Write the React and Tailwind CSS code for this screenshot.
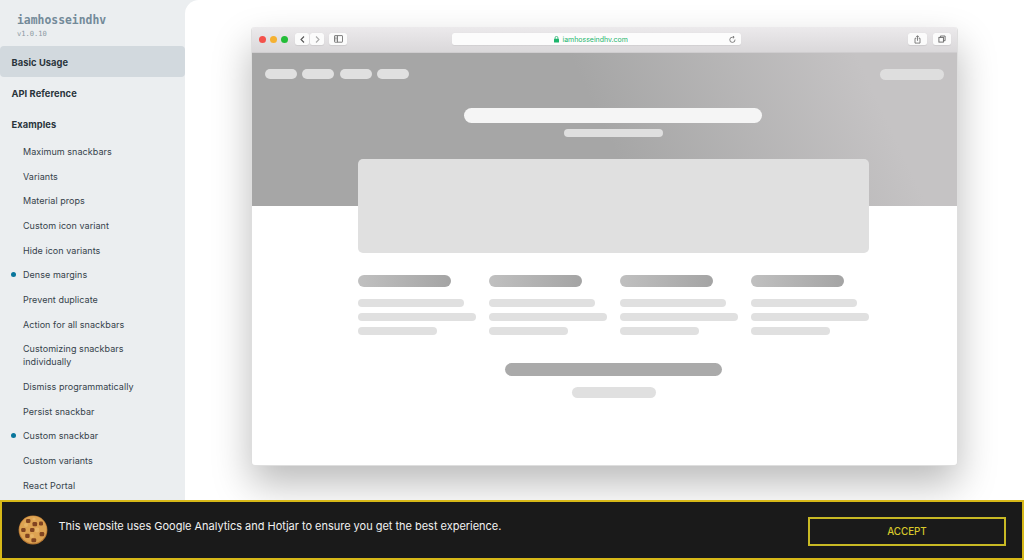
const examples = [
  { label: 'Maximum snackbars' },
  { label: 'Variants' },
  { label: 'Material props' },
  { label: 'Custom icon variant' },
  { label: 'Hide icon variants' },
  { label: 'Dense margins', dot: true },
  { label: 'Prevent duplicate' },
  { label: 'Action for all snackbars' },
  { label: 'Customizing snackbars individually' },
  { label: 'Dismiss programmatically' },
  { label: 'Persist snackbar' },
  { label: 'Custom snackbar', dot: true },
  { label: 'Custom variants' },
  { label: 'React Portal' },
];

function Sidebar() {
  return (
    <aside className="w-[185px] shrink-0 overflow-hidden text-[#35424b]">
      <div className="h-[46px] pl-[17px] pt-[13px] font-['DejaVu_Sans_Mono',monospace]">
        <div className="text-[11.4px] leading-[14px] font-bold text-[#738a99]">iamhosseindhv</div>
        <div className="text-[7.1px] leading-[13px] text-[#8b9aa4]">v1.0.10</div>
      </div>
      <nav className="text-[9.3px] font-bold tracking-[0.08px] text-[#29343b]">
        <div className="flex h-[31px] items-center rounded bg-[#d2d9de] pl-[11.5px] pt-[2px]">Basic Usage</div>
        <div className="flex h-[31px] items-center pl-[11.5px] pt-[2px]">API Reference</div>
        <div className="flex h-[31px] items-center pl-[11.5px] pt-[2px]">Examples</div>
      </nav>
      <ul className="pt-[0.4px]">
        {examples.map((item) => (
          <li key={item.label} className="flex pt-[5.8px] pb-[5.75px] text-[9px] leading-[13.1px] tracking-[0.05px]">
            <span className="flex w-[23px] shrink-0 pl-[11px] pt-[4px]">
              {item.dot && <span className="size-[5px] rounded-full bg-[#08769c]" />}
            </span>
            <span className="w-[122px]">{item.label}</span>
          </li>
        ))}
      </ul>
    </aside>
  );
}

function ToolButton({ className, children }) {
  return (
    <span className={`flex h-[12px] items-center justify-center rounded-[2.5px] bg-[#fbfbfb] shadow-[0_0.5px_1px_rgba(0,0,0,0.08)] ${className}`}>
      {children}
    </span>
  );
}

function Toolbar() {
  return (
    <div className="flex h-[26px] items-center border-b border-[#cfcdcf] bg-linear-to-b from-[#eceaec] to-[#dad8da] pl-[7px] pr-[6px] pb-px">
      <div className="flex w-[36px] gap-[4px]">
        <span className="size-[7px] rounded-full bg-[#f4514b]" />
        <span className="size-[7px] rounded-full bg-[#f5b131]" />
        <span className="size-[7px] rounded-full bg-[#24bd38]" />
      </div>
      <div className="flex w-[157px] gap-[1px]">
        <ToolButton className="w-[14px]">
          <svg className="h-[7px] w-[5px]" viewBox="0 0 5 7" fill="none" stroke="#555" strokeWidth="1.1"><path d="M4 0.5 1 3.5 4 6.5" /></svg>
        </ToolButton>
        <ToolButton className="w-[14px]">
          <svg className="h-[7px] w-[5px]" viewBox="0 0 5 7" fill="none" stroke="#aaa" strokeWidth="1.1"><path d="M1 0.5 4 3.5 1 6.5" /></svg>
        </ToolButton>
        <ToolButton className="ml-[4px] w-[18px]">
          <svg className="h-[8px] w-[9px]" viewBox="0 0 9 8" fill="none" stroke="#707070" strokeWidth="0.9"><rect x="0.5" y="0.6" width="8" height="6.6" rx="0.5" /><path d="M3.5 0.6v6.6M1.4 2.2h1.2M1.4 3.6h1.2M1.4 5h1.2" /></svg>
        </ToolButton>
      </div>
      <div className="flex h-[12px] w-[289px] items-center rounded-[2.5px] bg-[#fcfcfc] pl-[102px] pr-[5px] shadow-[0_0.5px_1px_rgba(0,0,0,0.06)]">
        <svg className="h-[7px] w-[5px]" viewBox="0 0 5 7"><rect y="2.8" width="5" height="3.8" rx="0.5" fill="#1db56c" /><path d="M1.1 3V1.8a1.4 1.4 0 0 1 2.8 0V3" fill="none" stroke="#1db56c" strokeWidth="0.8" /></svg>
        <span className="ml-[3.5px] whitespace-nowrap pt-px text-[7px] leading-[12px] tracking-[-0.02px] text-[#1db56c]">iamhosseindhv.com</span>
        <svg className="ml-auto h-[7px] w-[7px]" viewBox="0 0 7 7" fill="none" stroke="#666" strokeWidth="0.8"><path d="M6 3.6A2.6 2.6 0 1 1 3.6 1.2H5M3.9 0 5.2 1.2 3.9 2.4" /></svg>
      </div>
      <div className="ml-auto flex gap-[6px]">
        <ToolButton className="w-[19px]">
          <svg className="h-[9px] w-[7px]" viewBox="0 0 7 9" fill="none" stroke="#666" strokeWidth="0.8"><path d="M2.3 3.3H1v4.8h5V3.3H4.7M3.5 5.8V0.8M2 2.2 3.5 0.7 5 2.2" /></svg>
        </ToolButton>
        <ToolButton className="w-[18px]">
          <svg className="h-[8px] w-[8px]" viewBox="0 0 8 8" fill="none" stroke="#666" strokeWidth="0.9"><rect x="0.9" y="2.4" width="4.5" height="4.7" /><path d="M2.4 2.4V1h4.7v4.7H5.4" /></svg>
        </ToolButton>
      </div>
    </div>
  );
}

function Column() {
  return (
    <div className="w-[118.5px]">
      <div className="h-[12px] w-[93px] rounded-full bg-linear-to-r from-[#c0c0c0] to-[#a4a4a4]" />
      <div className="mt-[12px] h-[8px] w-[106.5px] rounded-full bg-[#e0e0e0]" />
      <div className="mt-[6px] h-[8px] rounded-full bg-[#e0e0e0]" />
      <div className="mt-[6px] h-[8px] w-[79px] rounded-full bg-[#e0e0e0]" />
    </div>
  );
}

function BrowserWindow() {
  return (
    <div className="ml-[66px] mt-[27px] h-[439px] w-[707px] overflow-hidden rounded-[4px] border border-t-0 border-[#dedede] bg-white shadow-[0_18px_38px_rgba(0,0,0,0.27)]">
      <Toolbar />
      <div className="h-[153px] bg-[linear-gradient(65deg,#a6a6a6_0%,#a6a6a6_50%,#c5c3c4_87%)] pt-[16px]">
        <div className="flex pl-[13px] pr-[13px]">
          <div className="flex gap-[5.4px]">
            {[0, 1, 2, 3].map((i) => <span key={i} className="h-[10px] w-[32px] rounded-full bg-[#e0e0e0]" />)}
          </div>
          <span className="ml-auto h-[11px] w-[64px] rounded-full bg-[#dedede]" />
        </div>
        <div className="ml-[212px] mt-[28px] h-[15px] w-[298px] rounded-full bg-[#f5f5f5]" />
        <div className="ml-[311.5px] mt-[6px] h-[8px] w-[99.5px] rounded-full bg-[#dfdfdf]" />
      </div>
      <div className="ml-[105.5px] -mt-[47px] h-[94px] w-[511.5px] rounded-[5px] bg-[#e0e0e0]" />
      <div className="ml-[105.5px] mt-[22.3px] flex gap-[12.5px]">
        <Column />
        <Column />
        <Column />
        <Column />
      </div>
      <div className="ml-[253px] mt-[28px] h-[13px] w-[217px] rounded-full bg-[#aaaaaa]" />
      <div className="ml-[319.5px] mt-[11px] h-[11px] w-[84.5px] rounded-full bg-[#e0e0e0]" />
    </div>
  );
}

function Cookie() {
  return (
    <svg className="size-[30px]" viewBox="0 0 30 30">
      <circle cx="15" cy="15" r="14.4" fill="#b87935" />
      <circle cx="15" cy="14.6" r="13.6" fill="#dda352" />
      <g fill="#e6b366"><circle cx="8" cy="10" r="2" /><circle cx="19" cy="15" r="2.4" /><circle cx="14" cy="21" r="2" /><circle cx="16" cy="4" r="1.6" /></g>
      <g fill="#814421"><rect x="8" y="4" width="4.4" height="4" rx="1.2" /><rect x="14.5" y="7" width="4.6" height="4.2" rx="1.2" /><rect x="21" y="6.5" width="4" height="4" rx="1.2" /><rect x="3.2" y="13" width="4.4" height="4" rx="1.2" /><rect x="12" y="13" width="4.4" height="4" rx="1.2" /><rect x="7.2" y="18.7" width="4.4" height="4.2" rx="1.2" /><rect x="21.6" y="17" width="4.6" height="4.2" rx="1.2" /><rect x="13.4" y="23.2" width="4.8" height="4" rx="1.2" /></g>
    </svg>
  );
}

export default function App() {
  return (
    <div className="flex h-[560px] w-[1024px] flex-col overflow-hidden bg-[#ebeef0] font-['Inter',sans-serif]">
      <div className="flex h-[500px] overflow-hidden">
        <Sidebar />
        <main className="flex-1 overflow-hidden rounded-tl-[14px] bg-white">
          <BrowserWindow />
        </main>
      </div>
      <div className="flex h-[60px] items-center border-2 border-[#d7b818] bg-[#1a1a1a] pl-[15.5px] pr-[16px]">
        <Cookie />
        <p className="ml-[11px] -mt-[8px] text-[11px] leading-[16px] tracking-[-0.02px] text-[#f1f1f1]">
          This website uses Google Analytics and Hotjar to ensure you get the best experience.
        </p>
        <button className="ml-auto mt-[3px] h-[29px] w-[198px] border-2 border-[#c8b924] pt-px text-[9.8px] font-medium text-[#d8c82b]">ACCEPT</button>
      </div>
    </div>
  );
}
